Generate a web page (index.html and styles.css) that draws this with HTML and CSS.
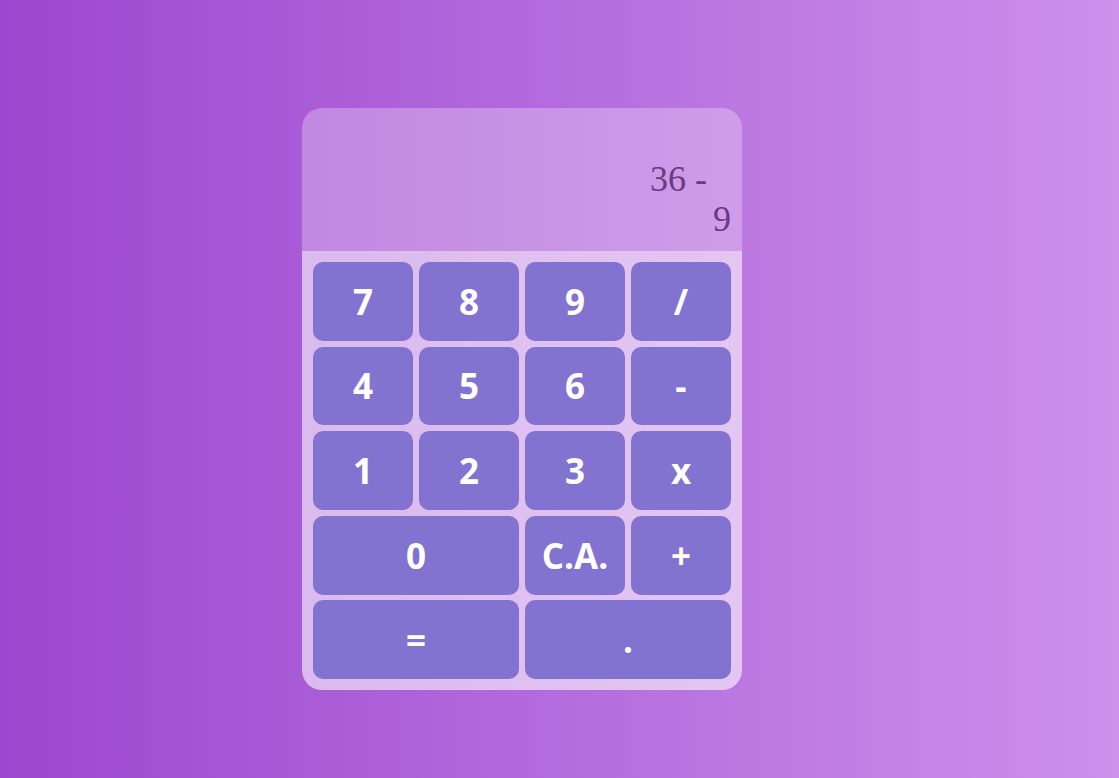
FILE: index.html
```html
<!DOCTYPE html>
<html>
<head>
<meta charset="utf-8">
<link rel="stylesheet" href="styles.css">
</head>
<body>
<div class="calc">
  <div class="display">
    <div class="screen"><span class="l1">36 -</span><span class="l2">9</span></div>
  </div>
  <div class="keys">
    <button class="key">7</button>
    <button class="key">8</button>
    <button class="key">9</button>
    <button class="key">/</button>
    <button class="key">4</button>
    <button class="key">5</button>
    <button class="key">6</button>
    <button class="key">-</button>
    <button class="key">1</button>
    <button class="key">2</button>
    <button class="key">3</button>
    <button class="key">x</button>
    <button class="key wide">0</button>
    <button class="key">C.A.</button>
    <button class="key">+</button>
    <button class="key wide">=</button>
    <button class="key wide">.</button>
  </div>
</div>
</body>
</html>
```
FILE: styles.css
```css
html, body {
  margin: 0;
  height: 100%;
}
body {
  background: linear-gradient(to right, #9c47cf, #cd90eb);
  font-family: "Open Sans", "Noto Sans", sans-serif;
  padding: 108px 0 0 302px;
  box-sizing: border-box;
  overflow: hidden;
}
.calc {
  width: 440px;
  border-radius: 20px;
  overflow: hidden;
}
.display {
  height: 143px;
  background: rgba(255, 255, 255, 0.28);
  display: flex;
  justify-content: flex-end;
  align-items: flex-end;
  padding: 0 11px 12px 0;
  box-sizing: border-box;
}
.screen {
  font-family: "Liberation Serif", "Times New Roman", serif;
  font-size: 36px;
  line-height: 40px;
  color: #6a3a82;
  display: flex;
  flex-direction: column;
  align-items: flex-end;
}
.l1 { padding-right: 24px; }
.keys {
  background: rgba(255, 255, 255, 0.58);
  padding: 11px;
  display: grid;
  grid-template-columns: repeat(4, 100px);
  grid-auto-rows: 78.8px;
  column-gap: 6px;
  row-gap: 5.8px;
}
.key {
  border: none;
  border-radius: 10px;
  background: #8373d1;
  color: #fff;
  font-family: "Open Sans", "Noto Sans", sans-serif;
  font-weight: 700;
  font-size: 35px;
  padding: 0;
  cursor: pointer;
}
.wide { grid-column: span 2; }
```
